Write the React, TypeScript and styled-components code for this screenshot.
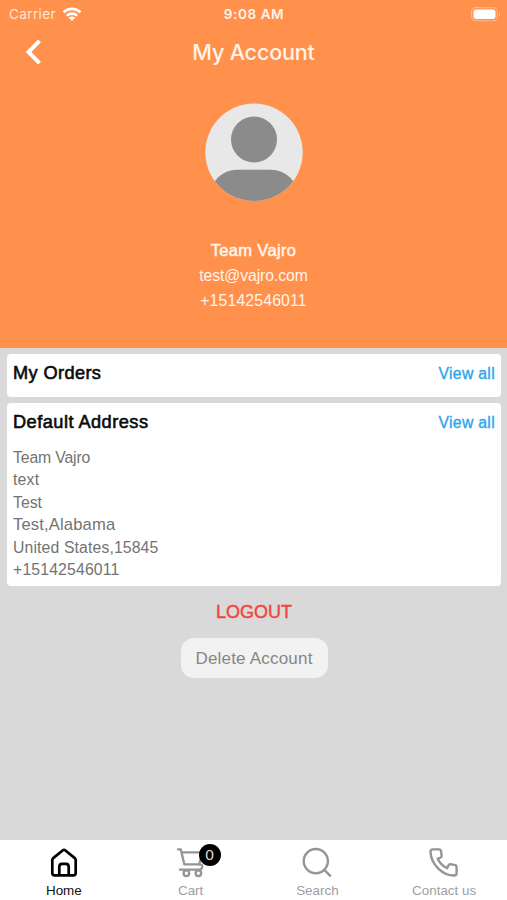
import React from 'react';
import styled, { createGlobalStyle } from 'styled-components';

const GlobalStyle = createGlobalStyle`
  * { box-sizing: border-box; }
  body { margin: 0; font-family: "Liberation Sans", Arial, sans-serif; }
  button { font-family: inherit; border: 0; padding: 0; background: none; }
  h1, h2, p { margin: 0; font-weight: 400; }
  svg { display: block; }
`;

const Screen = styled.div`
  width: 507px;
  height: 900px;
  display: flex;
  flex-direction: column;
  background: #d9d9d9;
  overflow: hidden;
`;

const Header = styled.header`
  height: 348px;
  flex: none;
  display: flex;
  flex-direction: column;
  background: #ff914d;
  color: #fff4ea;
`;

const StatusBar = styled.div`
  height: 27px;
  display: grid;
  grid-template-columns: 1fr auto 1fr;
  align-items: center;
  padding: 0 6px 0 9px;
  font-family: Inter, sans-serif;
  font-size: 13.6px;
  line-height: 28px;
`;

const Carrier = styled.div`
  display: flex;
  align-items: center;
  gap: 6px;
  letter-spacing: 0.35px;
  color: #ffe6d5;
`;

const Clock = styled.div`
  font-weight: 600;
  letter-spacing: 0.55px;
  padding-right: 2px;
`;

const BatterySlot = styled.div`
  display: flex;
  justify-content: flex-end;
`;

const TitleBar = styled.div`
  height: 50px;
  display: grid;
  grid-template-columns: 68px 1fr 68px;
  align-items: center;
`;

const BackButton = styled.button`
  padding-left: 24px;
  color: #fff;
`;

const Title = styled.h1`
  text-align: center;
  font: 500 21.6px/50px Inter, sans-serif;
  letter-spacing: -0.2px;
`;

const Profile = styled.section`
  display: flex;
  flex-direction: column;
  align-items: center;
  padding-top: 26px;
`;

const ProfileLines = styled.div`
  margin-top: 38px;
  text-align: center;
`;

const ProfileLine = styled.p<{ $strong?: boolean; $spacing?: number }>`
  height: 24.3px;
  font-size: ${p => (p.$strong ? 16.5 : 15.8)}px;
  line-height: ${p => (p.$strong ? 23 : 25)}px;
  letter-spacing: ${p => p.$spacing ?? 0}px;
  -webkit-text-stroke: ${p => (p.$strong ? 0.5 : 0)}px currentColor;
`;

const Content = styled.main`
  flex: 1;
  display: flex;
  flex-direction: column;
  padding: 6px 6px 0 7px;
`;

const Card = styled.section<{ $height: number }>`
  height: ${p => p.$height}px;
  flex: none;
  margin-bottom: 6px;
  padding: 0 6px;
  border-radius: 4px;
  background: #fff;
`;

const CardHead = styled.div`
  height: 38px;
  display: flex;
  align-items: center;
  justify-content: space-between;
`;

const CardTitle = styled.h2<{ $spacing: number }>`
  font-size: 18.2px;
  line-height: 38px;
  color: #0b0b0b;
  letter-spacing: ${p => p.$spacing}px;
  -webkit-text-stroke: 0.6px currentColor;
`;

const ViewAll = styled.button`
  padding-top: 2px;
  color: #2ba5e9;
  font-size: 15.8px;
  letter-spacing: 0.3px;
  -webkit-text-stroke: 0.35px currentColor;
`;

const Address = styled.div`
  padding-top: 6px;
`;

const AddressLine = styled.p<{ $spacing?: number; $size?: number }>`
  height: 22.4px;
  font-size: ${p => p.$size ?? 15.8}px;
  line-height: 22px;
  color: #737373;
  letter-spacing: ${p => p.$spacing ?? 0}px;
`;

const Actions = styled.div`
  display: flex;
  flex-direction: column;
  align-items: center;
  margin-top: 5px;
`;

const Logout = styled.button`
  height: 30px;
  color: #f2453d;
  font-size: 18px;
  -webkit-text-stroke: 0.45px currentColor;
`;

const DeleteButton = styled.button`
  width: 147px;
  height: 40px;
  margin-top: 11px;
  padding-top: 2px;
  border-radius: 13px;
  background: #f2f2f2;
  color: #868686;
  font-size: 17px;
  letter-spacing: 0.2px;
`;

const TabBar = styled.nav`
  height: 60px;
  flex: none;
  display: grid;
  grid-template-columns: repeat(4, 1fr);
  background: #fff;
`;

const Tab = styled.div<{ $active?: boolean }>`
  display: flex;
  flex-direction: column;
  align-items: center;
  padding: 7px 0 0 1px;
  color: ${p => (p.$active ? '#000' : '#959595')};
`;

const TabIcon = styled.div`
  position: relative;
  width: 32px;
  height: 32px;
`;

const TabLabel = styled.span<{ $active?: boolean }>`
  margin-top: 4px;
  font-size: 13.4px;
  line-height: 16px;
  color: ${p => (p.$active ? '#111' : '#a0a0a0')};
`;

const Badge = styled.span`
  position: absolute;
  left: 24px;
  top: -3px;
  width: 22px;
  height: 22px;
  border-radius: 50%;
  background: #000;
  color: #ddd;
  font-size: 15.5px;
  line-height: 22px;
  text-align: center;
`;

const WifiIcon = () => (
  <svg width="20" height="15" viewBox="0 0 20 15" fill="none" stroke="#fff" strokeWidth="2.6">
    <path d="M1.5 5.2C6.2.8 13.8.8 18.5 5.2" />
    <path d="M4.8 8.6C7.7 5.9 12.3 5.9 15.2 8.6" />
    <path d="M10 14 6.7 10.7C8.6 9.2 11.4 9.2 13.3 10.7Z" fill="#fff" stroke="none" />
  </svg>
);

const BatteryIcon = () => (
  <svg width="30" height="15" viewBox="0 0 30 15">
    <rect x="0.6" y="0.6" width="25.8" height="13.2" rx="4.2" fill="none" stroke="#ffb88b" strokeWidth="1.1" />
    <rect x="2.5" y="2.5" width="22" height="9.4" rx="2.6" fill="#fff" />
    <path d="M28 5v4.5c1.8-.7 1.8-3.8 0-4.5Z" fill="#ffb88b" />
  </svg>
);

const BackIcon = () => (
  <svg width="19" height="26" viewBox="0 0 19 26" fill="none" stroke="currentColor" strokeWidth="4">
    <path d="M15.5 1.8 4.5 13l11 11.2" />
  </svg>
);

const Avatar = () => (
  <svg width="98" height="98" viewBox="0 0 98 98">
    <defs>
      <clipPath id="disc"><circle cx="49" cy="49.3" r="48.7" /></clipPath>
    </defs>
    <g clipPath="url(#disc)">
      <rect width="98" height="98" fill="#e8e8e8" />
      <circle cx="49" cy="36.4" r="23" fill="#8b8b8b" />
      <rect x="5" y="66.7" width="88" height="60" rx="27" fill="#8b8b8b" />
    </g>
  </svg>
);

const HomeIcon = () => (
  <svg width="32" height="32" viewBox="0 0 32 32" fill="none" stroke="currentColor" strokeWidth="2.7" strokeLinejoin="round">
    <path d="M4.3 13.2c0-1 .4-1.7 1.2-2.3l9.1-7.4c.9-.7 1.9-.7 2.8 0l9.1 7.4c.8.6 1.2 1.3 1.2 2.3v12.9c0 1.5-.9 2.3-2.3 2.3H6.6c-1.4 0-2.3-.8-2.3-2.3Z" />
    <path d="M11.3 28.4v-8.6c0-1.9 1-2.9 2.8-2.9h3.8c1.8 0 2.8 1 2.8 2.9v8.6" />
  </svg>
);

const CartIcon = () => (
  <svg width="32" height="32" viewBox="0 0 32 32" fill="none" stroke="currentColor" strokeWidth="2.3" strokeLinejoin="round" strokeLinecap="round">
    <path d="M3 2.4h2.8L9.3 17.3h14.8l3.6-12M6.6 5.3H24" />
    <path d="M24.1 17.3c2.8 0 3.7 1 3.1 2.9-.5 1.8-1.3 2.5-3.2 2.5H4.9" />
    <circle cx="11.4" cy="26.2" r="2.8" />
    <circle cx="23.4" cy="26.2" r="2.8" />
  </svg>
);

const SearchIcon = () => (
  <svg width="32" height="32" viewBox="0 0 32 32" fill="none" stroke="currentColor" strokeWidth="2.4">
    <circle cx="14.8" cy="14.1" r="12.1" />
    <path d="m23.3 22.8 6.5 6.5" />
  </svg>
);

const PhoneIcon = () => (
  <svg width="32" height="32" viewBox="0 0 32 32" fill="none" stroke="currentColor" strokeWidth="2.4" strokeLinejoin="round">
    <path d="M4.7 2.4h6.1c1.4 0 2.2.8 2.3 2.1l.5 4c.1 1-.2 1.6-1 2l-2.9 1.3c2 4.4 5.2 7.5 9.4 9.4l1.4-2.8c.4-.9 1-1.2 2-1.1l4 .6c1.3.2 2.1 1 2.1 2.3v5.7c0 1.7-.9 2.6-2.5 2.6C14.4 28.5 2.9 17.3 2.5 4.8c0-1.5.8-2.4 2.2-2.4Z" />
  </svg>
);

const addressLines = [
  { text: 'Team Vajro', spacing: -0.15 },
  { text: 'text', spacing: 0.2 },
  { text: 'Test', spacing: 0 },
  { text: 'Test,Alabama', spacing: 0.15, size: 16.6 },
  { text: 'United States,15845', spacing: 0.12 },
  { text: '+15142546011', spacing: 0.15 },
];

const tabs = [
  { label: 'Home', Icon: HomeIcon, active: true },
  { label: 'Cart', Icon: CartIcon, badge: 0 },
  { label: 'Search', Icon: SearchIcon },
  { label: 'Contact us', Icon: PhoneIcon },
];

export default function App() {
  return (
    <Screen>
      <GlobalStyle />
      <Header>
        <StatusBar>
          <Carrier>Carrier <WifiIcon /></Carrier>
          <Clock>9:08 AM</Clock>
          <BatterySlot><BatteryIcon /></BatterySlot>
        </StatusBar>
        <TitleBar>
          <BackButton aria-label="Back"><BackIcon /></BackButton>
          <Title>My Account</Title>
        </TitleBar>
        <Profile>
          <Avatar />
          <ProfileLines>
            <ProfileLine $strong $spacing={0.35}>Team Vajro</ProfileLine>
            <ProfileLine $spacing={-0.1}>test@vajro.com</ProfileLine>
            <ProfileLine $spacing={0.15}>+15142546011</ProfileLine>
          </ProfileLines>
        </Profile>
      </Header>
      <Content>
        <Card $height={43}>
          <CardHead>
            <CardTitle $spacing={0.38}>My Orders</CardTitle>
            <ViewAll>View all</ViewAll>
          </CardHead>
        </Card>
        <Card $height={183}>
          <CardHead>
            <CardTitle $spacing={0.47}>Default Address</CardTitle>
            <ViewAll>View all</ViewAll>
          </CardHead>
          <Address>
            {addressLines.map(line => (
              <AddressLine key={line.text} $spacing={line.spacing} $size={line.size}>{line.text}</AddressLine>
            ))}
          </Address>
        </Card>
        <Actions>
          <Logout>LOGOUT</Logout>
          <DeleteButton>Delete Account</DeleteButton>
        </Actions>
      </Content>
      <TabBar>
        {tabs.map(({ label, Icon, active, badge }) => (
          <Tab key={label} $active={active}>
            <TabIcon>
              <Icon />
              {badge !== undefined && <Badge>{badge}</Badge>}
            </TabIcon>
            <TabLabel $active={active}>{label}</TabLabel>
          </Tab>
        ))}
      </TabBar>
    </Screen>
  );
}
